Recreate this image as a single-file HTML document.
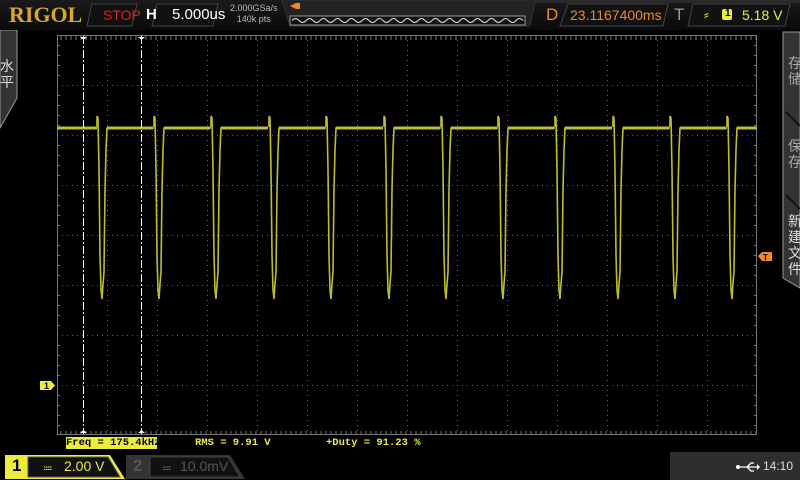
<!DOCTYPE html>
<html><head><meta charset="utf-8"><style>
html,body{margin:0;padding:0;background:#000;width:800px;height:480px;overflow:hidden;font-family:"Liberation Sans","Noto Sans CJK SC",sans-serif}
.a{position:absolute}
</style></head><body>
<div class="a" style="left:0;top:0;width:800px;height:30px;background:linear-gradient(#1a1a1a,#0a0a0a)"></div>
<div class="a" style="left:9px;top:2px;font-family:'Liberation Serif',serif;font-weight:bold;font-size:22px;color:#d9a72a;letter-spacing:0px">RIGOL</div>
<svg class="a" style="left:0;top:0" width="800" height="30">
<polygon points="92,4 137,4 132,26 87,26" fill="#111" stroke="#444"/>
<polygon points="157,4 218,4 213,26 152,26" fill="#111" stroke="#444"/>
<polygon points="282,0 800,0 800,2 535,2 530,26 290,26" fill="#222" stroke="#333"/>
<rect x="290" y="16" width="235" height="9" fill="#111" stroke="#999" stroke-width="1"/>
<path d="M292,20.5 q3.5,-4 7,0 t7,0 t7,0 t7,0 t7,0 t7,0 t7,0 t7,0 t7,0 t7,0 t7,0 t7,0 t7,0 t7,0 t7,0 t7,0 t7,0 t7,0 t7,0 t7,0 t7,0 t7,0 t7,0 t7,0 t7,0 t7,0 t7,0 t7,0 t7,0 t7,0 t7,0 t7,0 t7,0" fill="none" stroke="#ddd" stroke-width="1"/>
<polygon points="290,6 296,3 300,3 300,9 296,9" fill="#f08a1e"/>
<polygon points="568,4 668,4 663,26 560,26" fill="#111" stroke="#444"/>
<polygon points="693,4 790,4 785,26 688,26" fill="#111" stroke="#444"/>
<rect x="722" y="9" width="10" height="11" rx="2" fill="#ecec3c"/>
</svg>
<div class="a" style="left:103px;top:7px;color:#e0201a;font-size:14px">STOP</div>
<div class="a" style="left:146px;top:6px;color:#fff;font-size:15px;font-weight:bold">H</div>
<div class="a" style="left:172px;top:6px;color:#fff;font-size:15px">5.000us</div>
<div class="a" style="left:230px;top:3px;color:#bbb;font-size:9px;line-height:11px;text-align:center">2.000GSa/s<br>140k pts</div>
<div class="a" style="left:546px;top:5px;color:#f08a1e;font-size:17px">D</div>
<div class="a" style="left:570px;top:7px;color:#f08a1e;font-size:14px">23.1167400ms</div>
<div class="a" style="left:674px;top:5px;color:#999;font-size:17px">T</div>
<div class="a" style="left:704px;top:6px;color:#ecec3c;font-size:14px">⸗</div>
<div class="a" style="left:725px;top:8px;color:#000;font-size:10px;font-weight:bold">1</div>
<div class="a" style="left:742px;top:7px;color:#ecec3c;font-size:14px">5.18 V</div>

<svg class="a" style="left:0;top:30px" width="18" height="100"><polygon points="0,0 17,0 17,68 0,98" fill="#333" stroke="#999"/></svg>
<div class="a" style="left:0;top:58px;color:#ddd;font-size:14px;line-height:16px">水<br>平</div>
<svg class="a" style="left:782px;top:30px" width="18" height="260"><polygon points="1,2 18,2 18,258 1,248" fill="#333" stroke="#999"/><path d="M4,82 L18,96 M4,165 L18,179" stroke="#111" stroke-width="2"/></svg>
<div class="a" style="left:788px;top:55px;color:#aaa;font-size:14px;line-height:16px">存<br>储</div>
<div class="a" style="left:788px;top:138px;color:#aaa;font-size:14px;line-height:16px">保<br>存</div>
<div class="a" style="left:788px;top:213px;color:#ddd;font-size:14px;line-height:16px">新<br>建<br>文<br>件</div>

<svg class="a" style="left:0;top:0" width="800" height="480">
<defs>
<pattern id="hd" width="5" height="1" patternUnits="userSpaceOnUse"><rect width="1" height="1" fill="#777"/></pattern>
<clipPath id="cl"><rect x="57" y="35" width="700" height="400"/></clipPath>
</defs>
<g stroke="#666" stroke-width="1" stroke-dasharray="1,4" fill="none">
<path d="M107.5,35V435M157.5,35V435M207.5,35V435M257.5,35V435M307.5,35V435M357.5,35V435M407.5,35V435M457.5,35V435M507.5,35V435M557.5,35V435M607.5,35V435M657.5,35V435M707.5,35V435"/>
<path d="M57,85.5H757M57,135.5H757M57,185.5H757M57,235.5H757M57,285.5H757M57,335.5H757M57,385.5H757"/>
</g>
<rect x="57.5" y="35.5" width="699" height="399" fill="none" stroke="#777"/>
<g stroke="#777" stroke-width="1">
<path d="M57,45.5h3M57,55.5h3M57,65.5h3M57,75.5h3M57,95.5h3M57,105.5h3M57,115.5h3M57,125.5h3M57,145.5h3M57,155.5h3M57,165.5h3M57,175.5h3M57,195.5h3M57,205.5h3M57,215.5h3M57,225.5h3M57,245.5h3M57,255.5h3M57,265.5h3M57,275.5h3M57,295.5h3M57,305.5h3M57,315.5h3M57,325.5h3M57,345.5h3M57,355.5h3M57,365.5h3M57,375.5h3M57,395.5h3M57,405.5h3M57,415.5h3M57,425.5h3"/>
<path d="M757,45.5h-3M757,55.5h-3M757,65.5h-3M757,75.5h-3M757,95.5h-3M757,105.5h-3M757,115.5h-3M757,125.5h-3M757,145.5h-3M757,155.5h-3M757,165.5h-3M757,175.5h-3M757,195.5h-3M757,205.5h-3M757,215.5h-3M757,225.5h-3M757,245.5h-3M757,255.5h-3M757,265.5h-3M757,275.5h-3M757,295.5h-3M757,305.5h-3M757,315.5h-3M757,325.5h-3M757,345.5h-3M757,355.5h-3M757,365.5h-3M757,375.5h-3M757,395.5h-3M757,405.5h-3M757,415.5h-3M757,425.5h-3"/>
</g>
<rect x="57" y="35" width="700" height="5" fill="url(#hd)" transform="translate(0.5,0)"/>
<rect x="57" y="431" width="700" height="4" fill="url(#hd)" transform="translate(0.5,0)"/>
<defs>
<path id="p" d="M0,127 L0,116 L1,118 L2,170 L3,255 L4,290 L5,299 L6,284 L7,272 L8,190 L9,150 L10,128 L57,128" fill="none" stroke="#bdbd32" stroke-width="1.6"/>
</defs>
<g clip-path="url(#cl)">
<path d="M57,128 L97,128" stroke="#bdbd32" stroke-width="3"/>
<g stroke="#bdbd32" stroke-width="3"><path d="M107,128H153M164,128H210M221,128H268M279,128H325M336,128H383M394,128H440M451,128H497M508,128H554M565,128H612M623,128H669M680,128H726M737,128H757"/></g>
<use href="#p" x="97"/><use href="#p" x="154"/><use href="#p" x="211"/><use href="#p" x="269"/><use href="#p" x="326"/><use href="#p" x="384"/><use href="#p" x="441"/><use href="#p" x="498"/><use href="#p" x="555"/><use href="#p" x="613"/><use href="#p" x="670"/><use href="#p" x="727"/>
</g>
<path d="M83.5,36V434M141.5,36V434" stroke="#fff" stroke-width="1" stroke-dasharray="8,2,2,2"/>
<path d="M80,37h7l-3.5,3zM138,37h7l-3.5,3zM80,433h7l-3.5,-3zM138,433h7l-3.5,-3z" fill="#fff"/>
<polygon points="40,381 51,381 55,385.5 51,390 40,390" fill="#ecec3c"/>
<text x="44" y="389" font-size="9" font-weight="bold" fill="#000" font-family="Liberation Sans">1</text>
<polygon points="758,256 762,252 772,252 772,261 762,261" fill="#f08a1e"/>
<text x="763" y="260" font-size="8" font-weight="bold" fill="#000" font-family="Liberation Sans">T</text>
</svg>

<div class="a" style="left:66px;top:437px;width:91px;height:12px;background:#ecec3c"></div>
<div class="a" style="left:66px;top:437px;font-family:'Liberation Mono',monospace;font-size:10.5px;font-weight:bold;color:#000;line-height:12px">Freq = 175.4kHz</div>
<div class="a" style="left:195px;top:437px;font-family:'Liberation Mono',monospace;font-size:10.5px;font-weight:bold;color:#ecec3c;line-height:12px">RMS = 9.91 V</div>
<div class="a" style="left:326px;top:437px;font-family:'Liberation Mono',monospace;font-size:10.5px;font-weight:bold;color:#ecec3c;line-height:12px">+Duty = 91.23 %</div>

<div class="a" style="left:0;top:452px;width:800px;height:28px;background:#000"></div>
<div class="a" style="left:670px;top:452px;width:130px;height:28px;background:#2e2e2e"></div>
<svg class="a" style="left:0;top:452px" width="800" height="28">
<polygon points="600,0 670,0 660,28 600,28" fill="#000"/>
<polygon points="5,3 110,3 125,27 5,27" fill="#ecec3c"/>
<polygon points="28,5 108,5 120,25 28,25" fill="#111" stroke="#555"/>
<polygon points="126,3 230,3 245,27 126,27" fill="#333"/>
<polygon points="150,5 228,5 240,25 150,25" fill="#111" stroke="#444"/>
<path d="M44,15h8M44,17.5h8" stroke="#ecec3c" stroke-width="1" stroke-dasharray="1.5,0.5"/>
<path d="M163,15h8M163,17.5h8" stroke="#555" stroke-width="1"/>
<g stroke="#fff" fill="none" stroke-width="1.3"><path d="M738,15h19M747,15l4,-4h3M747,15l4,4h3"/></g>
<circle cx="738" cy="15" r="2" fill="#fff"/><path d="M757,12v6l3,-3z" fill="#fff"/>
</svg>
<div class="a" style="left:12px;top:456px;color:#000;font-size:17px;font-weight:bold">1</div>
<div class="a" style="left:64px;top:458px;color:#ecec3c;font-size:14px">2.00 V</div>
<div class="a" style="left:133px;top:456px;color:#555;font-size:17px;font-weight:bold">2</div>
<div class="a" style="left:180px;top:458px;color:#555;font-size:14px">10.0mV</div>
<div class="a" style="left:763px;top:459px;color:#ddd;font-size:12px">14:10</div>
</body></html>
